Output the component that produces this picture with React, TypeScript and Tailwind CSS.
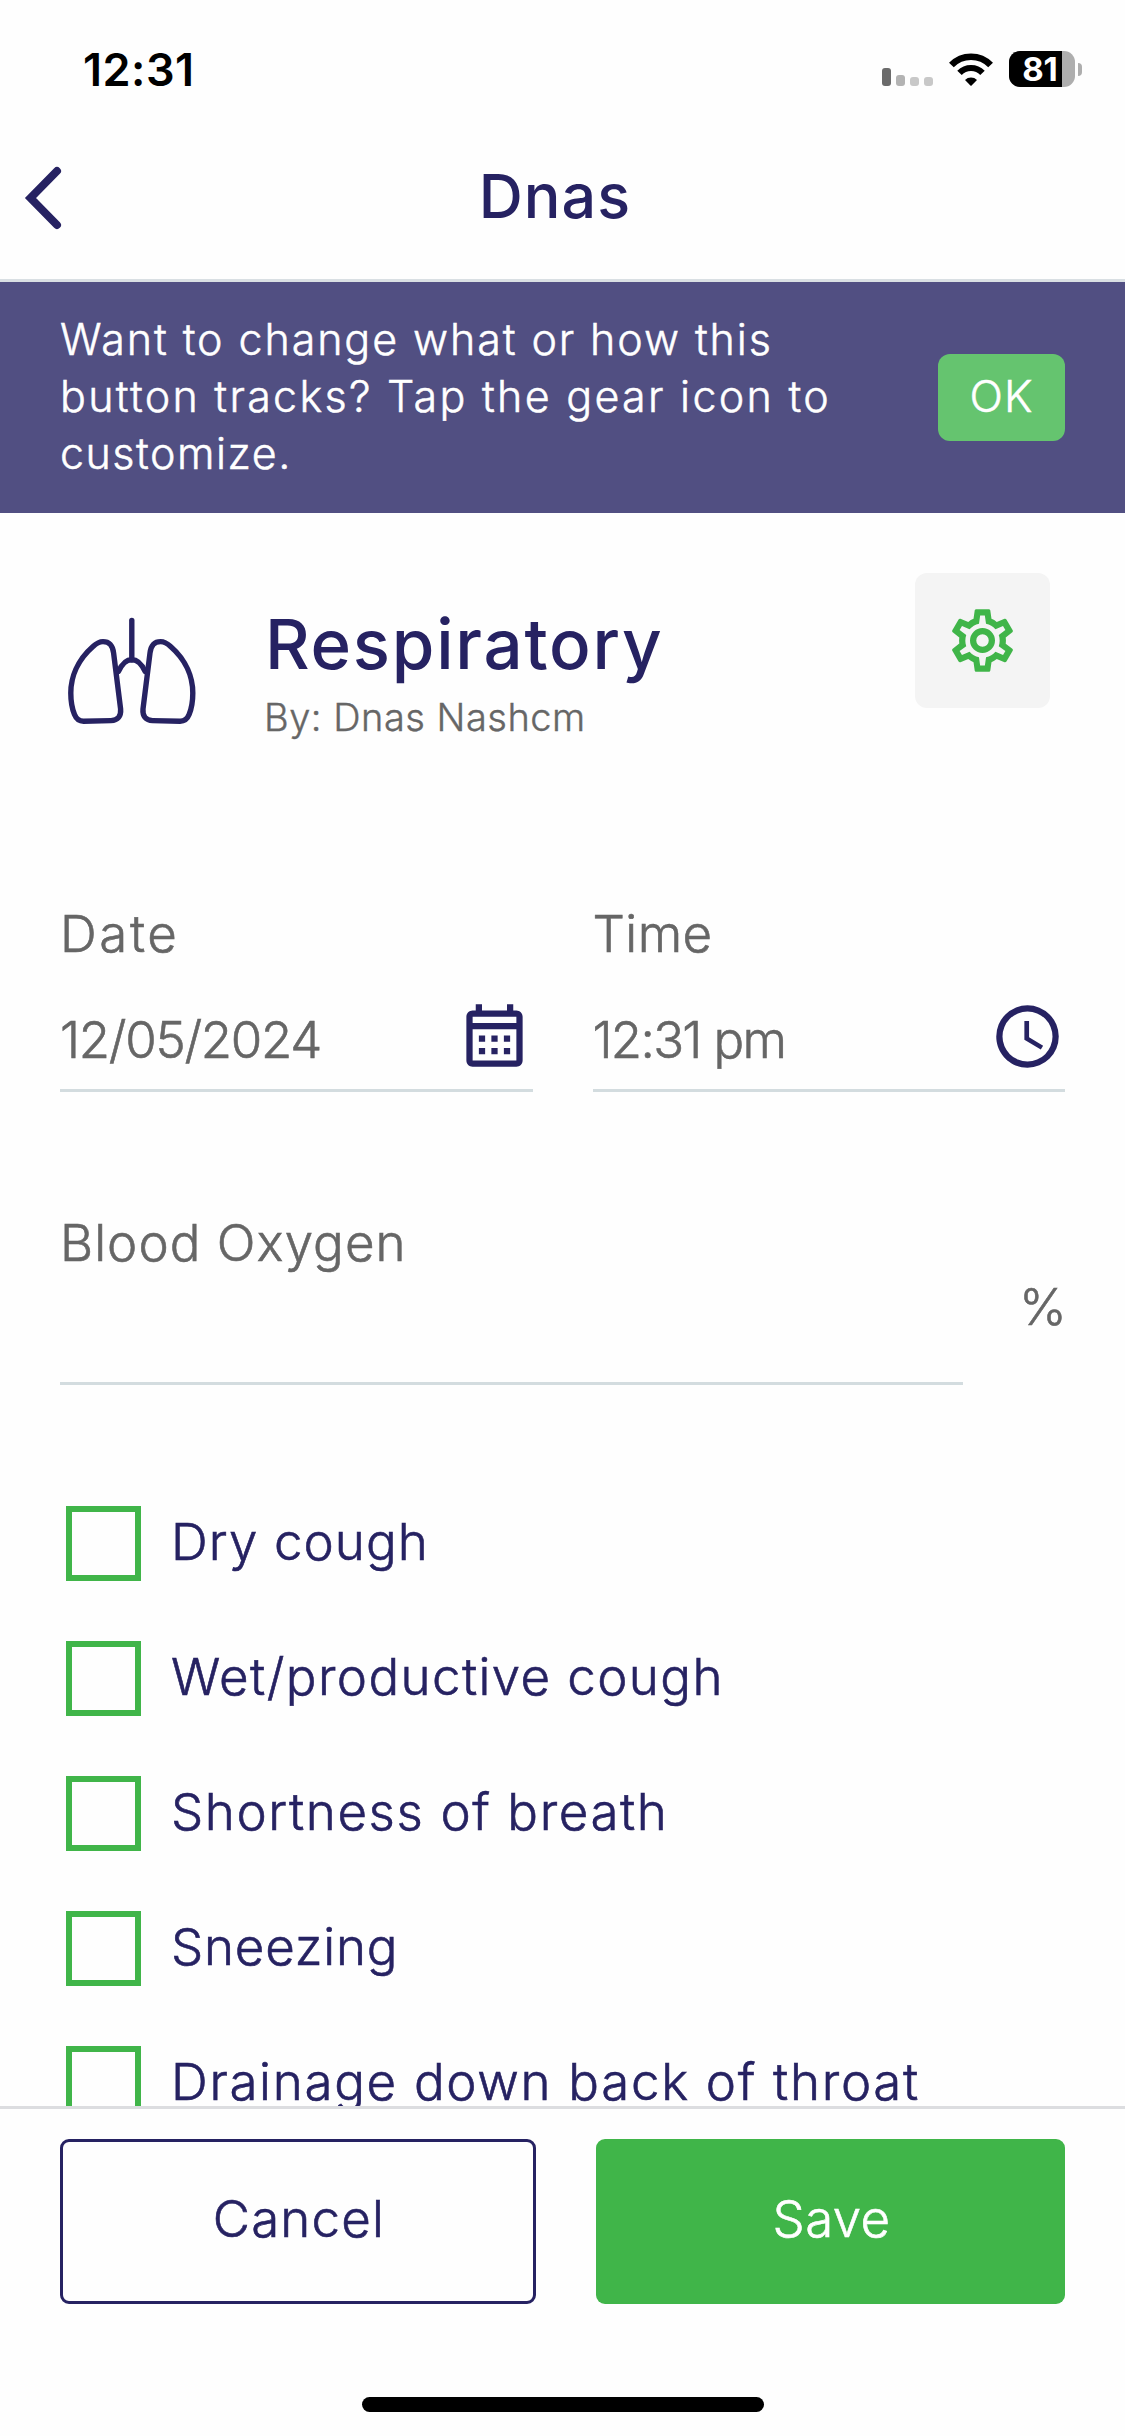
import React from "react";

const symptoms = [
  { label: "Dry cough", tracking: "tracking-[1.1px]" },
  { label: "Wet/productive cough", tracking: "tracking-[1.4px]" },
  { label: "Shortness of breath", tracking: "tracking-[1.6px]" },
  { label: "Sneezing", tracking: "tracking-[0.8px]" },
  { label: "Drainage down back of throat", tracking: "tracking-[1.7px]" },
];

function StatusBar() {
  return (
    <div className="flex h-[111px] shrink-0 items-center justify-between pt-[28px] pr-[43px] pl-[83px] text-black">
      <span className="text-[45px] leading-[60px] font-semibold tracking-[0.5px]">12:31</span>
      <div className="-mt-px flex items-center">
        <div className="mt-[15px] flex items-end gap-[5px]">
          <span className="h-[18px] w-[9px] rounded-[3px] bg-[#6b6b6b]" />
          <span className="h-[11px] w-[9px] rounded-[3px] bg-[#b3b3b3]" />
          <span className="h-[9px] w-[9px] rounded-[3px] bg-[#c8c8c8]" />
          <span className="h-[9px] w-[9px] rounded-[3px] bg-[#c8c8c8]" />
        </div>
        <svg className="ml-[15px] h-[33px] w-[46px]" viewBox="0 0 46 33" fill="none" stroke="#000">
          <path d="M3.4 12A27.3 27.3 0 0 1 42.6 12" strokeWidth="6.6" />
          <path d="M11.5 19.9A16 16 0 0 1 34.5 19.9" strokeWidth="6.2" />
          <path d="M17 26.9A8.6 8.6 0 0 1 29 26.9L23.6 32.4Q23 33 22.4 32.4Z" fill="#000" stroke="none" />
        </svg>
        <div className="ml-[15px] flex h-9 w-[66px] rounded-[11px] bg-[#aeaeae]">
          <div className="flex w-[53px] items-center justify-center rounded-l-[11px] bg-black pl-[9px] text-[33px] leading-9 font-bold text-white">
            81
          </div>
        </div>
        <span className="ml-[3px] h-[13px] w-1 rounded-r-full bg-[#aeaeae]" />
      </div>
    </div>
  );
}

function Header() {
  return (
    <header className="grid h-[171px] shrink-0 grid-cols-[1fr_auto_1fr] items-center border-b-[3px] border-[#d9dfe3]">
      <svg className="mt-[6px] ml-[24px] h-[64px] w-[40px]" viewBox="0 0 40 64" fill="none" stroke="#262262" strokeWidth="8" strokeLinecap="round">
        <path d="M33 5 6.5 32 33 59" />
      </svg>
      <h1 className="-ml-[15px] pt-[2px] text-[61px] leading-[80px] font-medium tracking-[1.1px]">Dnas</h1>
    </header>
  );
}

function Banner() {
  return (
    <section className="flex h-[231px] shrink-0 items-center justify-between bg-[#514f82] px-[60px] text-white">
      <p className="-mt-[2px] text-[43px] leading-[57px] font-light [-webkit-text-stroke:0.5px_currentColor]">
        <span className="block tracking-[1.9px]">Want to change what or how this</span>
        <span className="block tracking-[2.28px]">button tracks? Tap the gear icon to</span>
        <span className="block tracking-[1.5px]">customize.</span>
      </p>
      <button className="h-[87px] w-[127px] rounded-[12px] bg-[#65c46f] pb-[4px] text-[44px] font-light tracking-[1px] [-webkit-text-stroke:0.5px_currentColor]">
        OK
      </button>
    </section>
  );
}

function LungsIcon() {
  return (
    <svg className="mt-[44px] ml-[8px] h-[108px] w-[128px]" viewBox="0 0 128 108" fill="none" stroke="#262262" strokeWidth="5.4" strokeLinecap="round" strokeLinejoin="round">
      <path d="M63.8 3.4V43" />
      <path d="M50.5 54.5C53 49 57 42.600 63.8 42.600S74.600 49 77.100 54.5" />
      <path d="M45.600 36C44.600 28 41.500 24.600 35 24.600C31 24.600 28.500 26.200 25 29.500C9 43.500 2.800 61 2.800 76C2.800 85 4 91.500 6.500 97.500C8.500 102.500 11 104.200 15.500 104.200L43 103.600C50 103.400 53.200 99 52.600 92Z" />
      <path d="M82 36C83 28 86.100 24.600 92.600 24.600C96.600 24.600 99.100 26.200 102.600 29.500C118.600 43.500 124.800 61 124.800 76C124.800 85 123.600 91.500 121.100 97.500C119.100 102.500 116.600 104.200 112.100 104.200L84.600 103.600C77.600 103.400 74.400 99 75 92Z" />
    </svg>
  );
}

function CogIcon() {
  return (
    <svg className="size-[75px]" viewBox="0 0 24 24" fill="#40b549">
      <path d="M12,8A4,4 0 0,1 16,12A4,4 0 0,1 12,16A4,4 0 0,1 8,12A4,4 0 0,1 12,8M12,10A2,2 0 0,0 10,12A2,2 0 0,0 12,14A2,2 0 0,0 14,12A2,2 0 0,0 12,10M10,22C9.75,22 9.54,21.82 9.5,21.58L9.13,18.93C8.5,18.68 7.96,18.34 7.44,17.94L4.95,18.95C4.73,19.03 4.46,18.95 4.34,18.73L2.34,15.27C2.21,15.05 2.27,14.78 2.46,14.63L4.57,12.97L4.5,12L4.57,11L2.46,9.37C2.27,9.22 2.21,8.95 2.34,8.73L4.34,5.27C4.46,5.05 4.73,4.96 4.95,5.05L7.44,6.05C7.96,5.66 8.5,5.32 9.13,5.07L9.5,2.42C9.54,2.18 9.75,2 10,2H14C14.25,2 14.46,2.18 14.5,2.42L14.87,5.07C15.5,5.32 16.04,5.66 16.56,6.05L19.05,5.05C19.27,4.96 19.54,5.05 19.66,5.27L21.66,8.73C21.79,8.95 21.73,9.22 21.54,9.37L19.43,11L19.5,12L19.43,13L21.54,14.63C21.73,14.78 21.79,15.05 21.66,15.27L19.66,18.73C19.54,18.95 19.27,19.04 19.05,18.95L16.56,17.95C16.04,18.34 15.5,18.68 14.87,18.93L14.5,21.58C14.46,21.82 14.25,22 14,22H10M11.25,4L10.88,6.61C9.68,6.86 8.62,7.5 7.85,8.39L5.44,7.35L4.69,8.65L6.8,10.2C6.4,11.37 6.4,12.64 6.8,13.8L4.68,15.36L5.43,16.66L7.86,15.62C8.63,16.5 9.68,17.14 10.87,17.38L11.24,20H12.76L13.13,17.39C14.32,17.14 15.37,16.5 16.14,15.62L18.57,16.66L19.32,15.36L17.2,13.81C17.6,12.64 17.6,11.37 17.2,10.2L19.31,8.65L18.56,7.35L16.15,8.39C15.38,7.5 14.32,6.86 13.12,6.62L12.75,4H11.25Z" />
    </svg>
  );
}

function CalendarIcon() {
  return (
    <svg className="mt-[3px] mr-px size-[75px]" viewBox="0 0 24 24" fill="#262262">
      <path d="M7 11H9V13H7V11M21 5V19C21 20.11 20.11 21 19 21H5C3.89 21 3 20.1 3 19V5C3 3.9 3.9 3 5 3H6V1H8V3H16V1H18V3H19C20.11 3 21 3.9 21 5M5 5V7H19V5H5M19 19V9H5V19H19M15 13V11H17V13H15M11 13V11H13V13H11M7 15H9V17H7V15M15 17V15H17V17H15M11 17V15H13V17H11Z" />
    </svg>
  );
}

function ClockIcon() {
  return (
    <svg className="size-[75px]" viewBox="0 0 24 24" fill="#262262">
      <path d="M12,20A8,8 0 0,0 20,12A8,8 0 0,0 12,4A8,8 0 0,0 4,12A8,8 0 0,0 12,20M12,2A10,10 0 0,1 22,12A10,10 0 0,1 12,22C6.47,22 2,17.5 2,12A10,10 0 0,1 12,2M12.5,7V12.25L17,14.92L16.25,16.15L11,13V7H12.5Z" />
    </svg>
  );
}

function Intro() {
  return (
    <div className="flex h-[167px] items-start">
      <LungsIcon />
      <div className="ml-[69px] flex-1 pt-[29px]">
        <h2 className="text-[69px] leading-[84px] font-medium tracking-[1.77px]">Respiratory</h2>
        <p className="mt-[7px] -ml-px text-[38px] leading-[48px] font-light tracking-[0.5px] text-[#666] [-webkit-text-stroke:0.4px_currentColor]">
          By: Dnas Nashcm
        </p>
      </div>
      <button className="mr-[15px] flex size-[135px] items-center justify-center rounded-[12px] bg-[#f4f4f4]">
        <CogIcon />
      </button>
    </div>
  );
}

export default function App() {
  return (
    <div className="flex h-[2436px] w-[1125px] flex-col overflow-hidden bg-[#fefefe] font-[Inter,sans-serif] text-[#262262]">
      <StatusBar />
      <Header />
      <Banner />

      <main className="h-[1593px] shrink-0 overflow-hidden px-[60px] pt-[60px]">
        <Intro />

        <div className="mt-[164px] grid grid-cols-2 gap-[60px] text-[51px] leading-[60px] font-light text-[#666] [-webkit-text-stroke:0.6px_currentColor]">
          <div className="border-b-[3px] border-[#d3dcdf] pb-[15px]">
            <div className="tracking-[2.6px]">Date</div>
            <div className="mt-[35px] flex h-[75px] items-center justify-between">
              <span className="pt-[7px] tracking-[-1.3px]">12/05/2024</span>
              <CalendarIcon />
            </div>
          </div>
          <div className="border-b-[3px] border-[#d3dcdf] pb-[15px]">
            <div className="tracking-[0.4px]">Time</div>
            <div className="mt-[35px] flex h-[75px] items-center justify-between">
              <span className="pt-[7px] tracking-[-1.7px]">12:31 pm</span>
              <ClockIcon />
            </div>
          </div>
        </div>

        <div className="mt-[119px] flex h-[174px] text-[51px] leading-[60px] font-light text-[#666] [-webkit-text-stroke:0.6px_currentColor]">
          <div className="w-[903px] shrink-0 border-b-[3px] border-[#d3dcdf] pt-[2px] tracking-[1.05px]">Blood Oxygen</div>
          <span className="mt-[66px] ml-[56px]">%</span>
        </div>

        <ul className="mt-[121px] flex flex-col gap-[60px] pl-[6px]">
          {symptoms.map((s) => (
            <li key={s.label} className="flex h-[75px] items-center gap-[30px]">
              <span className="size-[75px] border-6 border-[#40b549]" />
              <span className={`pb-[3px] text-[51px] leading-[60px] font-light [-webkit-text-stroke:0.6px_currentColor] ${s.tracking}`}>
                {s.label}
              </span>
            </li>
          ))}
        </ul>
      </main>

      <footer className="flex flex-1 flex-col border-t-[3px] border-[#dcdde0] px-[60px] pt-[30px]">
        <div className="flex gap-[60px] text-[51px] font-light [-webkit-text-stroke:0.6px_currentColor]">
          <button className="h-[165px] w-[476px] rounded-[9px] border-[3px] border-[#262262] pb-[4px] pl-[2px] tracking-[1.2px]">Cancel</button>
          <button className="h-[165px] w-[469px] rounded-[9px] bg-[#40b549] pb-[4px] pl-[2px] tracking-[0.4px] text-white">Save</button>
        </div>
        <div className="mt-[93px] h-[15px] w-[402px] self-center rounded-full bg-black" />
      </footer>
    </div>
  );
}
